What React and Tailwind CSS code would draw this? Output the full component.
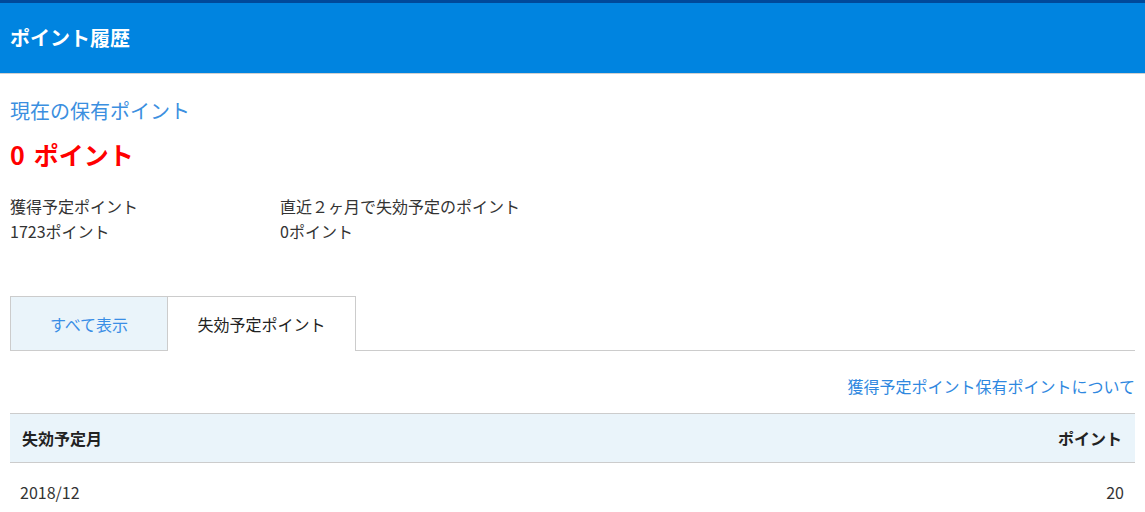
export default function App() {
  const rows = [{ month: "2018/12", points: 20 }];

  return (
    <div
      className="w-full min-h-screen bg-white text-[#333]"
      style={{ fontFamily: '"Noto Sans CJK JP", "Noto Sans", sans-serif' }}
    >
      <header className="border-t-[3px] border-t-[#00499a] border-b border-b-[#d0d0d0] bg-[#0084e0]">
        <div className="h-[70px] flex items-center px-[10px]">
          <h1 className="text-[20px] font-bold text-white leading-none">ポイント履歴</h1>
        </div>
      </header>

      <main className="px-[10px] pt-[22px]">
        <h2 className="text-[20px] leading-[30px] text-[#3b8fe0]">現在の保有ポイント</h2>
        <p className="mt-[10px] text-[25px] leading-[36px] font-bold text-[#ff0000]">
          0<span className="ml-[9px]">ポイント</span>
        </p>

        <div className="mt-[22px] flex text-[16px] leading-[25px]">
          <div className="w-[270px]">
            <p>獲得予定ポイント</p>
            <p>1723ポイント</p>
          </div>
          <div>
            <p>直近２ヶ月で失効予定のポイント</p>
            <p>0ポイント</p>
          </div>
        </div>

        <div className="mt-[52px] flex items-end border-b border-[#cccccc] text-[16px]">
          <button className="w-[158px] h-[54px] border border-b-0 border-[#cccccc] bg-[#eaf4fa] text-[#3a8ee6]">
            すべて表示
          </button>
          <button className="w-[188px] h-[55px] -mb-px border-t border-r border-[#cccccc] bg-white text-[#222]">
            失効予定ポイント
          </button>
        </div>

        <div className="mt-[23px] flex justify-end">
          <a className="text-[16px] leading-[24px] text-[#2f88e0]">獲得予定ポイント保有ポイントについて</a>
        </div>

        <table className="mt-[15px] w-full border-collapse text-[16px]">
          <thead>
            <tr className="bg-[#eaf4fa] border-y border-[#cccccc]">
              <th className="h-[49px] pl-[12px] text-left font-bold text-[#222]">失効予定月</th>
              <th className="h-[49px] pr-[13px] text-right font-bold text-[#222]">ポイント</th>
            </tr>
          </thead>
          <tbody>
            {rows.map((row) => (
              <tr key={row.month} className="border-b border-[#cccccc]">
                <td className="pl-[10px] py-[17px] leading-6">{row.month}</td>
                <td className="pr-[11px] py-[17px] leading-6 text-right">{row.points}</td>
              </tr>
            ))}
          </tbody>
        </table>
      </main>
    </div>
  );
}
